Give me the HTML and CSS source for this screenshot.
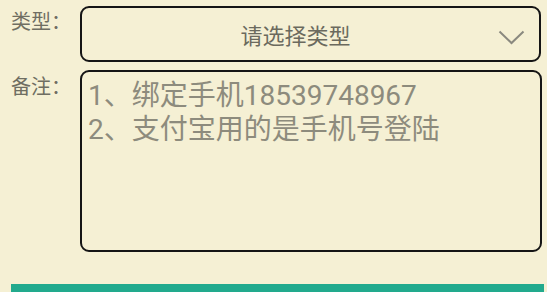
FILE: index.html
```html
<!DOCTYPE html>
<html lang="zh-CN">
<head>
<meta charset="utf-8">
<link rel="stylesheet" href="styles.css">
</head>
<body>
<div class="form">
  <div class="row">
    <div class="label">类型：</div>
    <div class="select">
      <span class="select-text">请选择类型</span>
      <svg class="chevron" width="27" height="15" viewBox="0 0 27 15"><path d="M1.5 1.5 L13.5 13 L25.5 1.5" fill="none" stroke="#8a897f" stroke-width="2"/></svg>
    </div>
  </div>
  <div class="row row-note">
    <div class="label label-note">备注：</div>
    <div class="note">1、绑定手机18539748967<br>2、支付宝用的是手机号登陆</div>
  </div>
  <div class="submit"></div>
</div>
</body>
</html>
```
FILE: styles.css
```css
html, body {
  margin: 0;
  padding: 0;
  background: #f5f0d4;
  overflow: hidden;
}
body {
  font-family: Roboto, "Noto Sans CJK SC", sans-serif;
}
.form {
  padding: 6px 6px 0 11px;
  display: flex;
  flex-direction: column;
}
.row {
  display: flex;
  align-items: flex-start;
}
.row-note {
  margin-top: 8px;
}
.label {
  width: 69px;
  flex: none;
  font-size: 20px;
  line-height: 24px;
  color: #6f6e62;
  padding-top: 4px;
}
.label-note {
  padding-top: 5px;
}
.select {
  flex: 1;
  height: 52px;
  border: 2px solid #151515;
  border-radius: 9px;
  position: relative;
  display: flex;
  align-items: center;
  justify-content: center;
}
.select-text {
  font-size: 22px;
  color: #6b6a5e;
  margin-right: 30px;
  margin-top: -1px;
}
.chevron {
  position: absolute;
  right: 14px;
  top: 22px;
}
.note {
  flex: 1;
  margin-right: -1px;
  height: 164px;
  border: 2px solid #151515;
  border-radius: 9px;
  padding: 7px 6px;
  font-size: 28px;
  line-height: 34px;
  color: #8d8b7d;
}
.submit {
  margin-top: 32px;
  margin-right: -3px;
  height: 48px;
  background: #22aa8d;
}
```
